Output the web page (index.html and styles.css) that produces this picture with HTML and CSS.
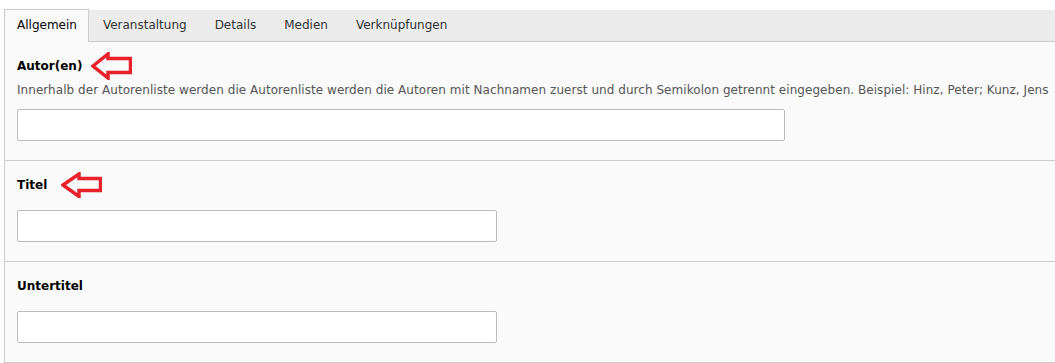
FILE: index.html
```html
<!DOCTYPE html>
<html lang="de">
<head>
  <meta charset="UTF-8">
  <title>Datensatz bearbeiten</title>
  <link rel="stylesheet" href="styles.css">
</head>
<body>
  <div class="editor">
    <!-- Reiter -->
    <ul class="tabs">
      <li class="tab active">Allgemein</li>
      <li class="tab">Veranstaltung</li>
      <li class="tab">Details</li>
      <li class="tab">Medien</li>
      <li class="tab">Verknüpfungen</li>
    </ul>

    <div class="panel">
      <div class="field">
        <label class="field-label" for="authors">Autor(en)
          <svg class="marker marker-authors" viewBox="0 0 41 28" width="41" height="28">
            <polygon points="2,14 17,2 17,6.5 39.5,6.5 39.5,20.5 17,20.5 17,26" />
          </svg>
        </label>
        <p class="field-help">Innerhalb der Autorenliste werden die Autorenliste werden die Autoren mit Nachnamen zuerst und durch Semikolon getrennt eingegeben. Beispiel: Hinz, Peter; Kunz, Jens</p>
        <input class="field-input wide" id="authors" type="text">
      </div>

      <div class="field">
        <label class="field-label" for="title">Titel
          <svg class="marker marker-title" viewBox="0 0 41 26" width="41" height="26">
            <polygon points="2,13 18,2 18,6.5 39.5,6.5 39.5,18.5 18,18.5 18,24.5" />
          </svg>
        </label>
        <input class="field-input" id="title" type="text">
      </div>

      <div class="field">
        <label class="field-label" for="subtitle">Untertitel</label>
        <input class="field-input" id="subtitle" type="text">
      </div>
    </div>
  </div>
</body>
</html>
```

FILE: styles.css
```css
body {
  margin: 0;
  background: #ffffff;
  font-family: "DejaVu Sans", Verdana, sans-serif;
  color: #333333;
  overflow: hidden;
}

.editor {
  margin: 10px 0 0 4px;
  width: 1100px;
}

/* Reiter */
.tabs {
  display: flex;
  margin: 0;
  padding: 0;
  list-style: none;
  height: 31px;
  background: #ececec;
  border-bottom: 1px solid #cccccc;
}

.tab {
  padding: 0 13px;
  font-size: 12px;
  line-height: 31px;
  color: #333333;
  border: 1px solid transparent;
  border-top: none;
  border-bottom: none;
}

.tab.active {
  height: 32px;
  background: #fafafa;
  color: #000000;
  border: 1px solid #cccccc;
  border-bottom: none;
  margin-top: -1px;
  padding-left: 12px;
  padding-right: 11px;
}

.panel {
  background: #fafafa;
  border-left: 1px solid #cccccc;
}

.field {
  padding: 15px 0 19px 12px;
  border-bottom: 1px solid #cccccc;
}

.field-label {
  display: flex;
  align-items: center;
  height: 18px;
  margin-bottom: 16px;
  font-size: 12px;
  font-weight: bold;
  color: #000000;
}

.field-help {
  margin: -10px 0 10px;
  font-size: 12px;
  letter-spacing: 0.05px;
  line-height: 18px;
  color: #555555;
  white-space: nowrap;
}

.field-input {
  display: block;
  box-sizing: border-box;
  width: 480px;
  height: 32px;
  margin: 0;
  border: 1px solid #bbbbbb;
  border-radius: 2px;
  background: #ffffff;
}

.field-input.wide {
  width: 768px;
}

.marker {
  flex: none;
  fill: none;
  stroke: #e8212b;
  stroke-width: 3.5;
}

.marker-authors {
  margin-left: 9px;
}

.marker-title {
  margin-left: 14px;
}
```
